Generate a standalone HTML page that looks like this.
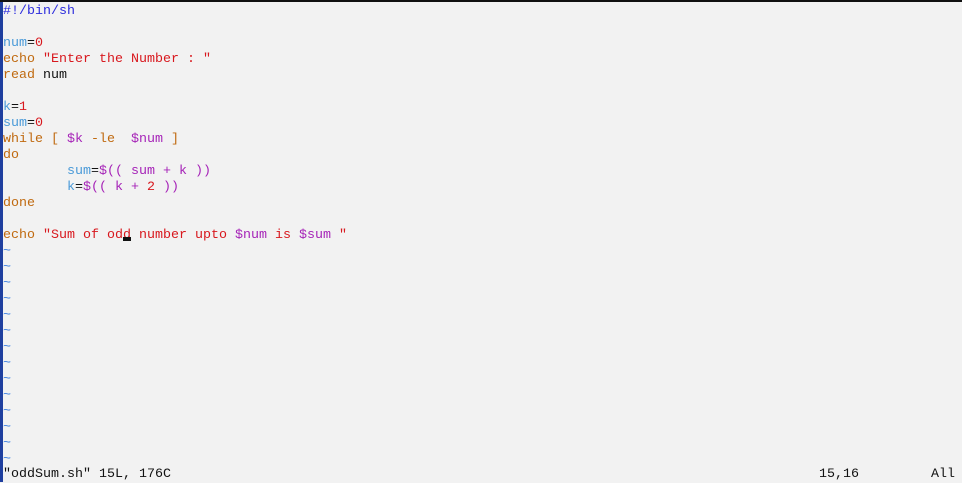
<!DOCTYPE html>
<html><head><style>
html,body{margin:0;padding:0}
body{width:962px;height:482px;background:#f2f2f2;position:relative;overflow:hidden;font-family:"Liberation Mono",monospace;font-size:13.33px}
#top{position:absolute;left:0;top:0;width:962px;height:2px;background:#111}
#left{position:absolute;left:0;top:2px;width:3px;height:480px;background:#1f3f9f}
pre{position:absolute;left:3px;top:4px;margin:0;font:inherit;line-height:16px;white-space:pre;color:#111}
.c{color:#2b2bdd}.v{color:#4a9ad8}.n{color:#d8181e}.k{color:#c06a10}.p{color:#a624b8}.s{color:#d8181e}.t{color:#3a7ee0}
#st{position:absolute;top:467px;left:3px;line-height:16px;white-space:pre;color:#111}
</style></head><body>
<div id="top"></div><div id="left"></div>
<pre><span class="c">#!/bin/sh</span>

<span class="v">num</span>=<span class="n">0</span>
<span class="k">echo</span> <span class="s">"Enter the Number : "</span>
<span class="k">read</span> num

<span class="v">k</span>=<span class="n">1</span>
<span class="v">sum</span>=<span class="n">0</span>
<span class="k">while</span> <span class="k">[</span> <span class="p">$k</span> <span class="k">-le</span>  <span class="p">$num</span> <span class="k">]</span>
<span class="k">do</span>
        <span class="v">sum</span>=<span class="p">$(( sum + k ))</span>
        <span class="v">k</span>=<span class="p">$(( k + </span><span class="n">2</span><span class="p"> ))</span>
<span class="k">done</span>

<span class="k">echo</span> <span class="s">"Sum of odd number upto </span><span class="p">$num</span><span class="s"> is </span><span class="p">$sum</span><span class="s"> "</span>
<span class="t">~</span>
<span class="t">~</span>
<span class="t">~</span>
<span class="t">~</span>
<span class="t">~</span>
<span class="t">~</span>
<span class="t">~</span>
<span class="t">~</span>
<span class="t">~</span>
<span class="t">~</span>
<span class="t">~</span>
<span class="t">~</span>
<span class="t">~</span>
<span class="t">~</span></pre>
<div style="position:absolute;left:123px;top:237px;width:8px;height:4px;background:#111"></div>
<div id="st">"oddSum.sh" 15L, 176C</div>
<div style="position:absolute;top:467px;left:819px;line-height:16px;color:#111">15,16</div>
<div style="position:absolute;top:467px;left:931px;line-height:16px;color:#111">All</div>
</body></html>
